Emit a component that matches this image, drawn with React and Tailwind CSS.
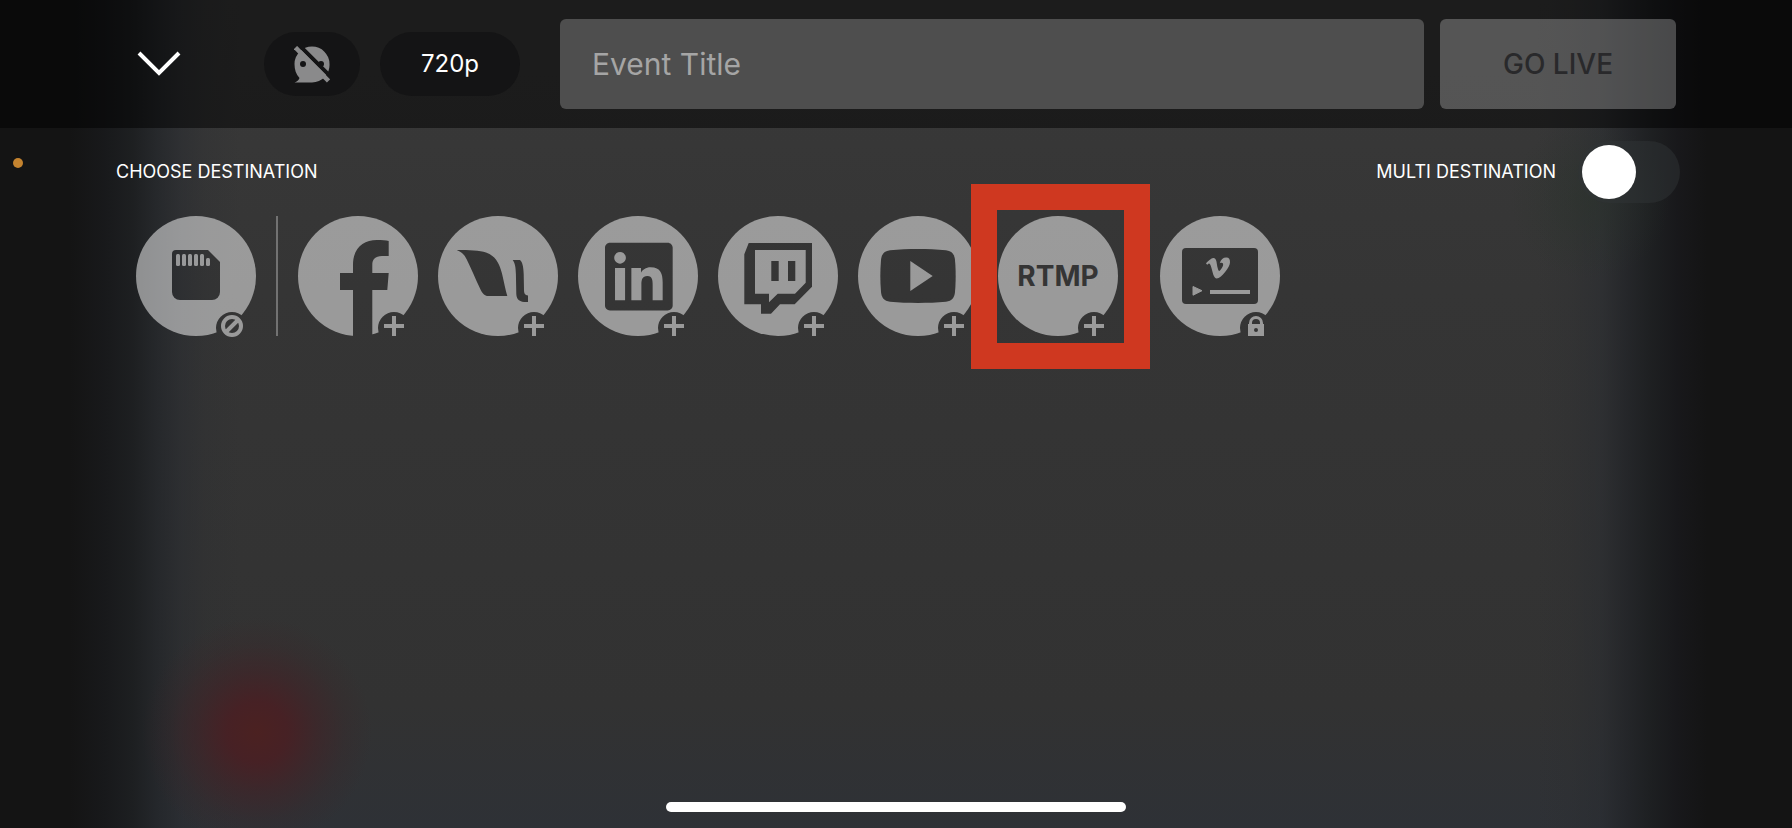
import { useState } from 'react';
import clsx from 'clsx';

const LINKEDIN_PATH =
  'M20.447 20.452h-3.554v-5.569c0-1.328-.027-3.037-1.852-3.037-1.853 0-2.136 1.445-2.136 2.939v5.667H9.351V9h3.414v1.561h.046c.477-.9 1.637-1.85 3.37-1.85 3.601 0 4.267 2.37 4.267 5.455v6.286zM5.337 7.433c-1.144 0-2.063-.926-2.063-2.065 0-1.138.92-2.063 2.063-2.063 1.14 0 2.064.925 2.064 2.063 0 1.139-.925 2.065-2.064 2.065zm1.782 13.019H3.555V9h3.564v11.452zM22.225 0H1.771C.792 0 0 .774 0 1.729v20.542C0 23.227.792 24 1.771 24h20.451C23.2 24 24 23.227 24 22.271V1.729C24 .774 23.2 0 22.222 0h.003z';

const VIMEO_PATH =
  'M23.9765 6.4168c-.105 2.338-1.739 5.5429-4.894 9.6088-3.2679 4.247-6.0258 6.3699-8.2898 6.3699-1.409 0-2.578-1.294-3.553-3.881l-1.9179-7.1138c-.719-2.584-1.488-3.878-2.312-3.878-.179 0-.806.378-1.8809 1.132l-1.129-1.457a315.06 315.06 0 003.501-3.1279c1.579-1.368 2.765-2.085 3.5539-2.159 1.867-.18 3.016 1.1 3.447 3.838.465 2.953.789 4.789.971 5.5069.5389 2.45 1.1309 3.674 1.7759 3.674.502 0 1.256-.796 2.265-2.385 1.004-1.589 1.54-2.797 1.612-3.628.144-1.371-.395-2.061-1.614-2.061-.574 0-1.167.121-1.777.391 1.186-3.8679 3.434-5.7568 6.7619-5.6368 2.4729.06 3.6279 1.664 3.4929 4.7969z';

// Glyphs are punched out of the disc through a mask: black cuts, white fills back in
const GLYPHS = {
  sd: (
    <>
      <path d="M40 34H72L84 46V76a8 8 0 0 1-8 8H44a8 8 0 0 1-8-8V38a4 4 0 0 1 4-4Z" fill="#000" />
      <g fill="#fff">
        <rect x="40" y="38" width="4" height="12" rx="1.5" />
        <rect x="46" y="38" width="4" height="12" rx="1.5" />
        <rect x="52" y="38" width="4" height="12" rx="1.5" />
        <rect x="58" y="38" width="4" height="12" rx="1.5" />
        <rect x="64" y="38" width="4" height="12" rx="1.5" />
        <rect x="70" y="42" width="4" height="8" rx="1.5" />
      </g>
    </>
  ),
  facebook: (
    <path
      d="M55 121V74H42V57H55V49C55 32 65 24 79 24C84 24 88 24.4 90.7 25V40H84C77 40 74.3 43.5 74.3 49V57H90.7L89.3 74H74.3V121Z"
      fill="#000"
    />
  ),
  livestream: (
    <g fill="#000">
      <path d="M18.7 34C31 34 42 34.4 48 36.5C58 40 61.5 48 64 57.5C66 66 67.5 74 69.3 80H50.3C46.5 80 44.5 77.5 42.5 73.5C37 62 33 52 28.5 43C25.5 37.5 23.5 36 18.7 34Z" />
      <path d="M74.7 44H82C84.5 46 85.5 51 85.7 58L86 74C86.1 77.5 87 79.2 90 79.5V86C82.5 86.3 78.5 84.5 78.3 78L77.9 58C77.7 51 77 47 74.7 44Z" />
    </g>
  ),
  linkedin: <path d={LINKEDIN_PATH} fill="#000" transform="translate(27 26.7) scale(2.82)" />,
  twitch: (
    <>
      <path d="M30.7 27H94V70.7L76.7 88.3H62L53 97.7H43V88.3H26.3V38.3Z" fill="#000" />
      <path d="M37 34H87.7V66.7L77 77.7H59.7L51 86.3V77.7H37Z" fill="#fff" />
      <path d="M53.3 45H60.7V65H53.3ZM70 45H77.3V65H70Z" fill="#000" />
    </>
  ),
  youtube: (
    <>
      <path
        d="M32 34.3C50 32.6 70 32.6 88 34.3C94 35 96.5 38.5 97 44C97.9 54 97.9 66 97 76C96.5 81.5 94 85 88 85.7C70 87.3 50 87.3 32 85.7C26 85 23.5 81.5 23 76C22.1 66 22.1 54 23 44C23.5 38.5 26 35 32 34.3Z"
        fill="#000"
      />
      <path d="M52.3 45L74.7 60L52.3 75Z" fill="#fff" />
    </>
  ),
  vimeo: (
    <>
      <rect x="22" y="32" width="76" height="56" rx="4" fill="#000" />
      <path d={VIMEO_PATH} fill="#fff" transform="translate(46 40)" />
      <path d="M33 70.5L42 74.7L33 79.2Z" fill="#fff" stroke="#fff" strokeLinejoin="round" />
      <rect x="50" y="74" width="40" height="4" fill="#fff" />
    </>
  ),
};

const BADGES = {
  add: <path d="M96 100V120M86 110H106" stroke="#fff" strokeWidth="4" />,
  blocked: (
    <path
      d="M105 110a9 9 0 1 1-18 0a9 9 0 1 1 18 0ZM90 116L102 104"
      fill="none"
      stroke="#fff"
      strokeWidth="4"
    />
  ),
  locked: (
    <>
      <path d="M90.5 108V107a5.5 5.5 0 0 1 11 0V108" fill="none" stroke="#fff" strokeWidth="3" />
      <path d="M88 108H104V120H88ZM98 114a2 2 0 1 0-4 0a2 2 0 1 0 4 0Z" fill="#fff" fillRule="evenodd" />
    </>
  ),
};

const PLATFORMS = [
  { id: 'facebook', name: 'Facebook', badge: 'add' },
  { id: 'livestream', name: 'Livestream', badge: 'add' },
  { id: 'linkedin', name: 'LinkedIn', badge: 'add' },
  { id: 'twitch', name: 'Twitch', badge: 'add' },
  { id: 'youtube', name: 'YouTube', badge: 'add' },
  { id: 'rtmp', name: 'RTMP', badge: 'add', text: 'RTMP', highlighted: true },
];

function Destination({ id, name, badge, text, highlighted }) {
  return (
    <button
      type="button"
      aria-label={name}
      className={clsx('grid size-[120px] shrink-0 place-items-center', highlighted && 'relative')}
    >
      <svg viewBox="0 0 120 120" className="col-start-1 row-start-1 size-full overflow-visible opacity-50">
        <mask id={`cut-${id}`} maskUnits="userSpaceOnUse" x="0" y="0" width="120" height="120">
          <circle cx="60" cy="60" r="60" fill="#fff" />
          {GLYPHS[id]}
          <circle cx="96" cy="112" r="16" fill="#000" />
        </mask>
        <rect width="120" height="120" fill="#fff" mask={`url(#cut-${id})`} />
        {BADGES[badge]}
      </svg>
      {text && (
        <span className="z-10 col-start-1 row-start-1 text-[28px] leading-8 font-bold text-[#353535]">
          {text}
        </span>
      )}
      {highlighted && (
        <span className="pointer-events-none absolute -top-8 -right-8 -bottom-[33px] -left-[27px] border-[26px] border-[#cf3820]" />
      )}
    </button>
  );
}

function ChatOffIcon() {
  return (
    <svg viewBox="0 0 36 37" className="h-[37px] w-9">
      <mask id="chat-off" maskUnits="userSpaceOnUse" x="0" y="0" width="36" height="37">
        <path
          d="M18 0.500a17.500 17.500 0 0 1 17.500 17.500a17.500 17.500 0 0 1-17.500 18.500H0.500C3 35.500 4.800 34.200 5.500 32C2 28.500 0.500 23.500 0.500 18A17.500 17.500 0 0 1 18 0.500Z"
          fill="#fff"
        />
        <circle cx="9" cy="18" r="3" fill="#000" />
        <circle cx="27" cy="18" r="3" fill="#000" />
        <path d="M0 -6L40 34" stroke="#000" strokeWidth="4" />
        {/* Clears the sliver of the bubble left above the slash's upper end */}
        <path d="M0 0H8L4 4Z" fill="#000" />
        <path d="M1.500 1.500L34.500 35" stroke="#fff" strokeWidth="4.500" />
      </mask>
      <rect width="36" height="37" fill="#8a8a8b" mask="url(#chat-off)" />
    </svg>
  );
}

function TopBar() {
  const [title, setTitle] = useState('');

  return (
    <header className="flex items-center bg-black/50 px-[116px] py-[19px]">
      <button type="button" aria-label="Close" className="mr-[62px] grid h-16 w-[86px] place-items-center">
        <svg viewBox="0 0 44 26" className="h-[26px] w-11">
          <path d="M2 2L22 22L42 2" fill="none" stroke="#fff" strokeWidth="4" />
        </svg>
      </button>
      <div className="mr-10 flex gap-5">
        <button
          type="button"
          aria-label="Chat off"
          className="grid h-16 w-24 place-items-center rounded-full bg-[#141415]"
        >
          <ChatOffIcon />
        </button>
        <button type="button" className="h-16 w-[140px] rounded-full bg-[#141415] text-2xl text-white">
          720p
        </button>
      </div>
      <input
        type="text"
        aria-label="Event Title"
        placeholder="Event Title"
        value={title}
        onChange={(e) => setTitle(e.target.value)}
        className="mr-4 h-[90px] min-w-0 flex-1 rounded-md bg-[#4e4e4e] px-8 text-3xl text-white outline-none placeholder:text-[#a5a5a5]"
      />
      <button
        type="button"
        className="h-[90px] w-[236px] rounded-md bg-white/25 text-[28px] font-medium text-[#29292b]"
      >
        GO LIVE
      </button>
    </header>
  );
}

export default function App() {
  const [multi, setMulti] = useState(false);

  return (
    <div className="min-h-screen bg-[linear-gradient(180deg,#393939,#353535_35%,#323232_85%,#2e3136)] font-['Inter',sans-serif]">
      {/* Blurred camera preview: red glow and green tint over the dark side edges */}
      <div className="relative flex min-h-screen flex-col bg-[radial-gradient(circle_at_257px_732px,#4b2121_0,#482024f0_30px,#42222699_60px,#3c242740_88px,#32282a00_115px),radial-gradient(circle_at_1590px_200px,#29332a70_0,#29332a00_80px),linear-gradient(90deg,#141414_70px,#17181af5_105px,#1b1d1fe6_133px,#212428c0_157px,#272a2f80_182px,#2b2d3040_205px,#30303000_240px),linear-gradient(270deg,#141414_85px,#17171af5_115px,#1b1d1fe6_140px,#202226c0_165px,#272a2f80_190px,#2b2d3040_220px,#30303000_255px)]">
        <TopBar />
        <span className="absolute top-[158px] left-[13px] size-[10px] rounded-full bg-[#c4832f]" />

        <main>
          <div className="flex items-center justify-between pt-[13px] pr-28 pl-[116px]">
            <h2 className="text-lg text-white">CHOOSE DESTINATION</h2>
            <label className="flex items-center gap-[22px] text-lg text-white">
              MULTI DESTINATION
              <input
                type="checkbox"
                role="switch"
                checked={multi}
                onChange={(e) => setMulti(e.target.checked)}
                className="flex h-[62px] w-[102px] appearance-none items-center rounded-full bg-[#303336]/50 px-1 before:size-[54px] before:rounded-full before:bg-white before:content-[''] checked:justify-end checked:bg-green-500"
              />
            </label>
          </div>

          <div className="mt-[13px] flex pl-[136px]">
            <Destination id="sd" name="Record to device" badge="blocked" />
            <div className="mx-5 w-[2px] bg-white/30" />
            <div className="flex gap-5">
              {PLATFORMS.map((p) => (
                <Destination key={p.id} {...p} />
              ))}
            </div>
            <div className="ml-[42px]">
              <Destination id="vimeo" name="Vimeo" badge="locked" />
            </div>
          </div>
        </main>

        <footer className="mt-auto flex justify-center pb-4">
          <div className="h-[10px] w-[460px] rounded-full bg-white" />
        </footer>
      </div>
    </div>
  );
}
